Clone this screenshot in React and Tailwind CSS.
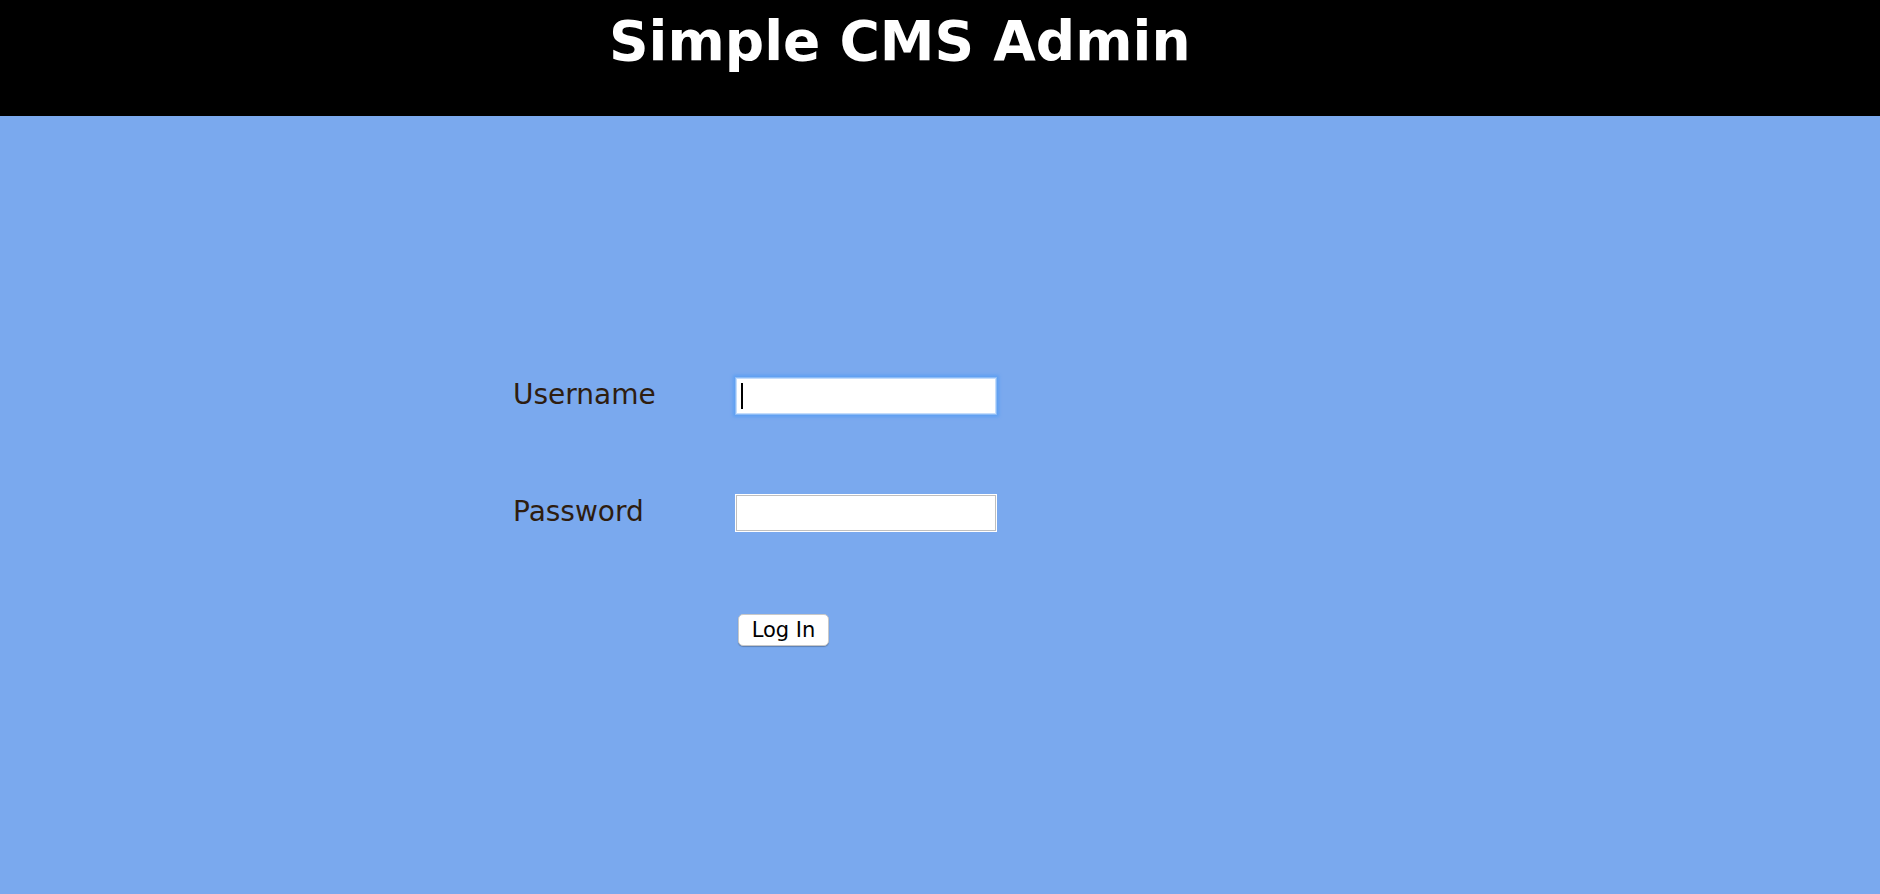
import React from 'react';

const font = { fontFamily: '"DejaVu Sans", Verdana, sans-serif' };

const Field = ({ label, type, focused }) => (
  <div className="flex items-center h-[38px]">
    <label className="w-[223px] text-[28px] leading-[32px] text-[#2e1d10] pb-[2px]">{label}</label>
    <div className="relative">
      <input
        type={type}
        className={`block w-[260px] h-[36px] bg-white outline-none ${
          focused
            ? 'border border-[#c4dcfb] shadow-[0_0_0_1px_#8cbcf6,0_0_3px_3px_#5e9ff2]'
            : 'border border-[#bfbfbf] shadow-[0_0_0_1px_#ffffff]'
        }`}
      />
      {focused && <span className="absolute left-[5px] top-[5px] w-[2px] h-[26px] bg-black" />}
    </div>
  </div>
);

export default function App() {
  return (
    <div className="min-h-screen bg-[#7aa9ee]" style={font}>
      {/* Header */}
      <header className="h-[116px] bg-black">
        <h1 className="pl-[609px] pt-[9px] text-[55px] leading-[64px] font-bold text-white">
          Simple CMS Admin
        </h1>
      </header>

      {/* Login form */}
      <form className="pt-[261px] pl-[513px] flex flex-col gap-[79px]" onSubmit={(e) => e.preventDefault()}>
        <Field label="Username" type="text" focused />
        <Field label="Password" type="password" />
        <div className="flex items-center h-[38px] pl-[225px]">
          <button
            type="submit"
            className="w-[91px] h-[32px] bg-white rounded-[5px] border border-[#c8c8c8] shadow-[0_1px_1px_rgba(0,0,0,0.25)] text-[21px] leading-none text-black"
          >
            Log In
          </button>
        </div>
      </form>
    </div>
  );
}
